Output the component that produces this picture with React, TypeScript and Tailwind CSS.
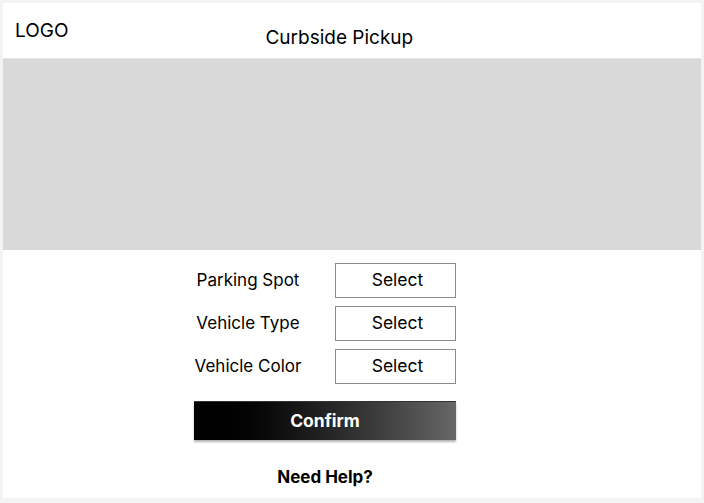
import React from "react";

const rows = ["Parking Spot", "Vehicle Type", "Vehicle Color"];

export default function App() {
  return (
    <div
      className="w-[704px] h-[503px] bg-[#f3f3f3] pt-[3px] pl-[3px] pr-[3px] pb-[5px]"
      style={{ fontFamily: "Inter, 'Noto Sans', sans-serif" }}
    >
      <div className="w-full h-full bg-white flex flex-col text-black">
        <div className="h-[55px] flex items-start">
          <div className="pl-[12px] pt-[14px] text-[19px] leading-[27px]">LOGO</div>
          <div className="ml-[197px] pt-[21px] text-[19px] leading-[27px]">Curbside Pickup</div>
        </div>
        <div className="h-[192px] bg-[#d9d9d9] border-t border-[#e6e6e6]" />
        <div className="ml-[191px] w-[262px] mt-[13px] flex flex-col">
          <div className="flex flex-col gap-[8px]">
            {rows.map((r) => (
              <div key={r} className="flex items-center h-[35px]">
                <div className="w-[108px] text-center text-[17px] leading-[20px] pb-[2px]">{r}</div>
                <div className="ml-[33px] w-[121px] h-[35px] border border-[#8a8a8a] flex items-center justify-center text-[17.5px] pb-[1px] pl-[4px]">
                  Select
                </div>
              </div>
            ))}
          </div>
          <button className="mt-[17px] w-[262px] h-[39px] bg-gradient-to-r from-[#000000] to-[#676767] text-white font-bold text-[17.5px] shadow-[0_2px_2px_rgba(0,0,0,0.3)] border-t border-[#333] flex items-center justify-center pt-[1px]">
            Confirm
          </button>
          <div className="mt-[27px] text-center font-bold text-[17px] leading-[20px]">Need Help?</div>
        </div>
      </div>
    </div>
  );
}
